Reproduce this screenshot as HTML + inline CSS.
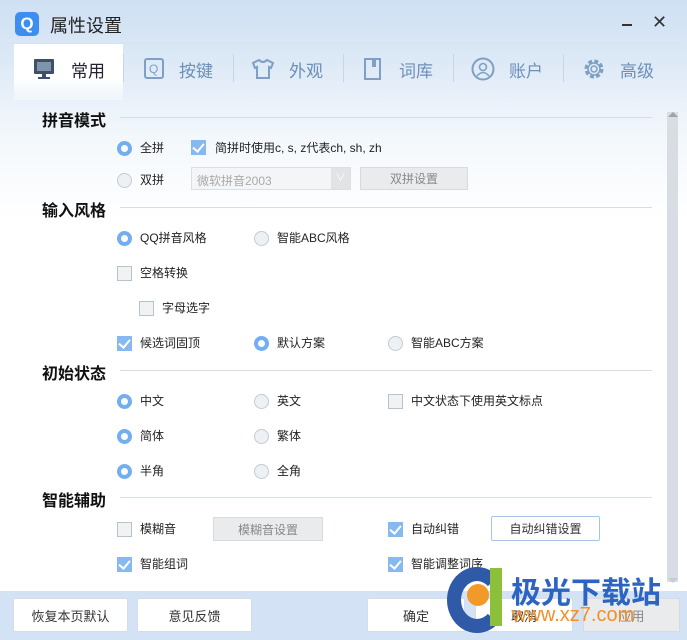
<!DOCTYPE html>
<html><head><meta charset="utf-8"><style>
*{margin:0;padding:0;box-sizing:border-box}
body{width:687px;height:640px;overflow:hidden;font-family:"Liberation Sans","Noto Sans CJK SC",sans-serif;position:relative;background:#fff}
.bg{position:absolute;left:0;top:0;width:687px;height:640px;background:linear-gradient(180deg,#cfe0f3 0,#dce9f6 60px,#e8f0f9 95px,#f4f8fc 140px,#fff 220px,#fff 100%)}
.a{position:absolute}
.t{font-size:18px;color:#222;left:50px;top:12px}
.tab{top:52px;height:34px;font-size:17px;color:#6d8fb8;display:flex;align-items:center}
.sep{top:54px;width:1px;height:28px;background:#c7d6e6}
.h{left:42px;font-size:16px;color:#111;font-weight:bold}
.ln{left:120px;width:532px;height:1px;background:#d6dde6}
.lb{font-size:12px;color:#222;line-height:14px}
.r{width:15px;height:15px;border-radius:50%;border:1px solid #c2cad4;background:#eef1f4}
.r.on{background:#fff;border:4px solid #72aef0}
.c{width:15px;height:15px;border:1px solid #b8c2cc;background:#f1f2f4}
.c.on{background:#86b9ef;border:none}
.c.on:after{content:"";position:absolute;left:4px;top:1px;width:5px;height:9px;border:solid #fff;border-width:0 2px 2px 0;transform:rotate(40deg)}
.btn{background:#fff;border:1px solid #d6dde6;border-radius:2px;font-size:13px;color:#333;display:flex;align-items:center;justify-content:center}
.dis{background:#e9ebed;border:1px solid #d8dadc;color:#888;font-size:12px;display:flex;align-items:center;justify-content:center}
</style></head><body>
<div class="bg"></div>
<div class="a" style="left:15px;top:12px;width:24px;height:24px;border-radius:5px;background:#3c8ff0;color:#fff;font-weight:bold;font-size:17px;text-align:center;line-height:24px">Q</div>
<div class="a t">属性设置</div>
<div class="a" style="left:622px;top:24px;width:10px;height:2px;background:#333"></div>
<div class="a" style="left:652px;top:12px;font-size:18px;color:#333">✕</div>
<div class="a" style="left:10px;top:43px;width:672px;height:1px;background:#d7e3ef"></div>
<div class="a" style="left:14px;top:44px;width:109px;height:56px;background:linear-gradient(#fff,#fff 60%,rgba(255,255,255,0.3))"></div>
<div class="a tab" style="left:33px"><svg width="22" height="24"><rect x="1" y="2" width="20" height="15" rx="1" fill="#3e5168"/><rect x="4" y="5" width="14" height="9" fill="#7f95ac"/><rect x="9" y="17" width="4" height="3" fill="#3e5168"/><rect x="5" y="20" width="12" height="2" fill="#3e5168"/></svg><span style="margin-left:16px;color:#223;">常用</span></div>
<div class="a sep" style="left:123px"></div>
<div class="a tab" style="left:143px"><svg width="22" height="24"><rect x="2" y="2" width="18" height="19" rx="2" fill="none" stroke="#7f9fc4" stroke-width="2"/><text x="6" y="16" font-size="12" fill="#7f9fc4" font-family="Liberation Sans">Q</text></svg><span style="margin-left:14px">按键</span></div>
<div class="a sep" style="left:233px"></div>
<div class="a tab" style="left:251px"><svg width="24" height="24"><path d="M8 3 L2 6 L4 11 L6 10 L6 21 L18 21 L18 10 L20 11 L22 6 L16 3 Q12 7 8 3Z" fill="none" stroke="#7f9fc4" stroke-width="2"/></svg><span style="margin-left:14px">外观</span></div>
<div class="a sep" style="left:343px"></div>
<div class="a tab" style="left:363px"><svg width="20" height="24"><rect x="2" y="2" width="15" height="20" fill="none" stroke="#7f9fc4" stroke-width="2"/><rect x="9" y="2" width="4" height="8" fill="#7f9fc4"/></svg><span style="margin-left:16px">词库</span></div>
<div class="a sep" style="left:453px"></div>
<div class="a tab" style="left:471px"><svg width="24" height="24"><circle cx="12" cy="12" r="10.5" fill="none" stroke="#7f9fc4" stroke-width="2"/><circle cx="12" cy="10" r="3.5" fill="none" stroke="#7f9fc4" stroke-width="1.6"/><path d="M6 19 Q12 12 18 19" fill="none" stroke="#7f9fc4" stroke-width="1.6"/></svg><span style="margin-left:14px">账户</span></div>
<div class="a sep" style="left:563px"></div>
<div class="a tab" style="left:582px"><svg width="24" height="24"><circle cx="12" cy="12" r="8" fill="none" stroke="#7f9fc4" stroke-width="3" stroke-dasharray="4 2.3"/><circle cx="12" cy="12" r="6" fill="none" stroke="#7f9fc4" stroke-width="1.5"/><circle cx="12" cy="12" r="3" fill="none" stroke="#7f9fc4" stroke-width="1.5"/></svg><span style="margin-left:14px">高级</span></div>

<div class="a h" style="top:107px">拼音模式</div><div class="a ln" style="top:117px"></div>
<div class="a h" style="top:197px">输入风格</div><div class="a ln" style="top:207px"></div>
<div class="a h" style="top:360px">初始状态</div><div class="a ln" style="top:370px"></div>
<div class="a h" style="top:487px">智能辅助</div><div class="a ln" style="top:497px"></div>

<div class="a r on" style="left:117px;top:141px"></div><div class="a lb" style="left:140px;top:141px">全拼</div>
<div class="a c on" style="left:191px;top:140px"></div><div class="a lb" style="left:215px;top:141px">简拼时使用c, s, z代表ch, sh, zh</div>
<div class="a r" style="left:117px;top:173px"></div><div class="a lb" style="left:140px;top:173px">双拼</div>
<div class="a" style="left:191px;top:167px;width:160px;height:23px;border:1px solid #dcdfe2;background:#f4f5f6;font-size:12px;color:#aaa;padding:4px 5px">微软拼音2003</div>
<div class="a" style="left:331px;top:168px;width:19px;height:21px;background:#e1e3e5;color:#fff;font-size:10px;text-align:center;line-height:21px">∨</div>
<div class="a dis" style="left:360px;top:167px;width:108px;height:23px">双拼设置</div>

<div class="a r on" style="left:117px;top:231px"></div><div class="a lb" style="left:140px;top:231px">QQ拼音风格</div>
<div class="a r" style="left:254px;top:231px"></div><div class="a lb" style="left:277px;top:231px">智能ABC风格</div>
<div class="a c" style="left:117px;top:266px"></div><div class="a lb" style="left:140px;top:266px">空格转换</div>
<div class="a c" style="left:139px;top:301px"></div><div class="a lb" style="left:162px;top:301px">字母选字</div>
<div class="a c on" style="left:117px;top:336px"></div><div class="a lb" style="left:140px;top:336px">候选词固顶</div>
<div class="a r on" style="left:254px;top:336px"></div><div class="a lb" style="left:277px;top:336px">默认方案</div>
<div class="a r" style="left:388px;top:336px"></div><div class="a lb" style="left:411px;top:336px">智能ABC方案</div>

<div class="a r on" style="left:117px;top:394px"></div><div class="a lb" style="left:140px;top:394px">中文</div>
<div class="a r" style="left:254px;top:394px"></div><div class="a lb" style="left:277px;top:394px">英文</div>
<div class="a c" style="left:388px;top:394px"></div><div class="a lb" style="left:411px;top:394px">中文状态下使用英文标点</div>
<div class="a r on" style="left:117px;top:429px"></div><div class="a lb" style="left:140px;top:429px">简体</div>
<div class="a r" style="left:254px;top:429px"></div><div class="a lb" style="left:277px;top:429px">繁体</div>
<div class="a r on" style="left:117px;top:464px"></div><div class="a lb" style="left:140px;top:464px">半角</div>
<div class="a r" style="left:254px;top:464px"></div><div class="a lb" style="left:277px;top:464px">全角</div>

<div class="a c" style="left:117px;top:522px"></div><div class="a lb" style="left:140px;top:522px">模糊音</div>
<div class="a dis" style="left:213px;top:517px;width:110px;height:24px">模糊音设置</div>
<div class="a c on" style="left:388px;top:522px"></div><div class="a lb" style="left:411px;top:522px">自动纠错</div>
<div class="a btn" style="left:491px;top:516px;width:109px;height:25px;font-size:12px;border-color:#a8c4e4">自动纠错设置</div>
<div class="a c on" style="left:117px;top:557px"></div><div class="a lb" style="left:140px;top:557px">智能组词</div>
<div class="a c on" style="left:388px;top:557px"></div><div class="a lb" style="left:411px;top:557px">智能调整词序</div>

<div class="a" style="left:667px;top:112px;width:11px;height:470px;background:#d7dde2"></div>
<div class="a" style="left:668px;top:112px;width:0;height:0;border:5px solid transparent;border-bottom-color:#9aa5b0;border-top:0"></div>
<div class="a" style="left:668px;top:578px;width:0;height:0;border:5px solid transparent;border-top-color:#c5ccd3;border-bottom:0"></div>

<div class="a" style="left:0;top:591px;width:687px;height:49px;background:#d3e3f5"></div>
<div class="a btn" style="left:13px;top:598px;width:115px;height:34px">恢复本页默认</div>
<div class="a btn" style="left:137px;top:598px;width:115px;height:34px">意见反馈</div>
<div class="a btn" style="left:367px;top:598px;width:98px;height:34px">确定</div>
<div class="a btn" style="left:475px;top:598px;width:98px;height:34px">取消</div>
<div class="a dis" style="left:583px;top:598px;width:97px;height:34px;font-size:13px">应用</div>

<div class="a" style="left:447px;top:567px;width:60px;height:66px;border-radius:50%;border:14px solid #2e5aa8;border-right-color:transparent"></div>
<div class="a" style="left:467px;top:584px;width:22px;height:22px;border-radius:50%;background:#f19a2a"></div>
<div class="a" style="left:490px;top:568px;width:12px;height:58px;background:#8cbf3a"></div>
<div class="a" style="left:511px;top:568px;font-size:30px;font-weight:bold;color:#2c64c4">极光下载站</div>
<div class="a" style="left:512px;top:604px;font-size:20px;color:#f0902a">www.xz7.com</div>
</body></html>
